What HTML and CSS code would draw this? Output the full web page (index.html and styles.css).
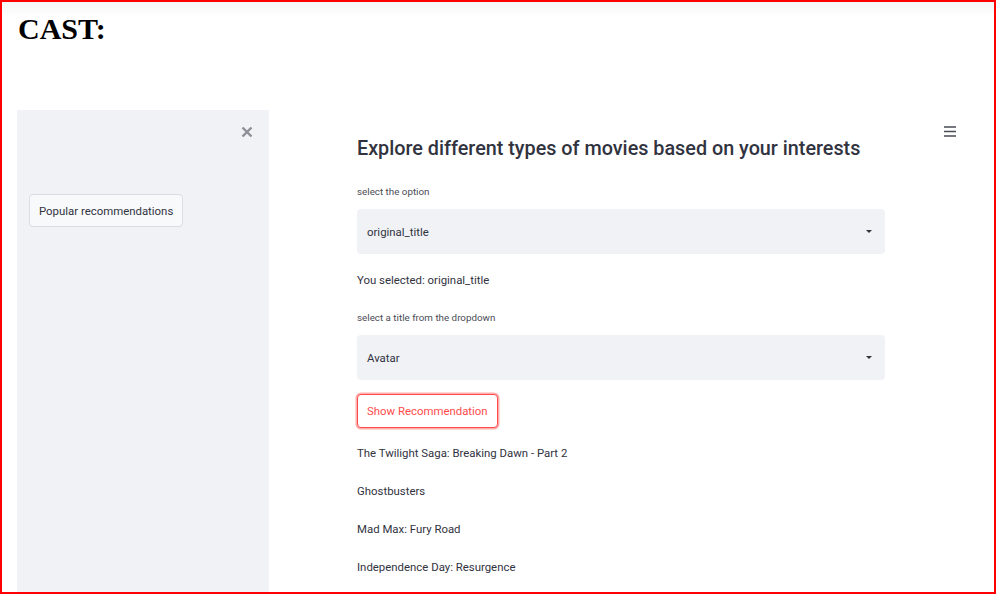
FILE: index.html
```html
<!DOCTYPE html>
<html lang="en">
<head>
<meta charset="utf-8">
<title>CAST</title>
<link rel="stylesheet" href="styles.css">
</head>
<body>
<div class="frame">
  <h1 class="cast">CAST:</h1>
  <div class="app">
    <aside class="sidebar">
      <div class="side-head">
        <button class="close" aria-label="Close sidebar">
          <svg width="12" height="12" viewBox="0 0 12 12"><path d="M1.5 1.5 L10.5 10.5 M10.5 1.5 L1.5 10.5" stroke="#8d8f96" stroke-width="2.4" stroke-linecap="butt"/></svg>
        </button>
      </div>
      <button class="side-btn">Popular recommendations</button>
    </aside>
    <main class="main">
      <section class="content">
        <h2 class="title">Explore different types of movies based on your interests</h2>
        <label class="label">select the option</label>
        <div class="select"><span>original_title</span><span class="caret"></span></div>
        <p class="text sel-text">You selected: original_title</p>
        <label class="label label2">select a title from the dropdown</label>
        <div class="select select2"><span>Avatar</span><span class="caret"></span></div>
        <button class="show-btn">Show Recommendation</button>
        <ul class="recs">
          <li>The Twilight Saga: Breaking Dawn - Part 2</li>
          <li>Ghostbusters</li>
          <li>Mad Max: Fury Road</li>
          <li>Independence Day: Resurgence</li>
        </ul>
      </section>
      <button class="menu" aria-label="Menu">
        <svg width="12" height="11" viewBox="0 0 12 11"><path d="M0 1 H12 M0 5.5 H12 M0 10 H12" stroke="#4a4c56" stroke-width="1.6"/></svg>
      </button>
    </main>
  </div>
</div>
</body>
</html>
```

FILE: styles.css
```css
html, body {
  margin: 0;
  padding: 0;
  background: #ffffff;
}

.frame {
  width: 996px;
  height: 594px;
  box-sizing: border-box;
  border: 2px solid #ff0000;
  padding-left: 15px;
  overflow: hidden;
  display: flex;
  flex-direction: column;
  background: linear-gradient(to bottom, #f6f6f6 0px, #ffffff 16px);
}

.cast {
  margin: 11px 0 0 1px;
  font-family: "Liberation Serif", "Times New Roman", serif;
  font-weight: bold;
  font-size: 30px;
  line-height: 32px;
  color: #000000;
}

.app {
  display: flex;
  flex: 1;
  margin-top: 65px;
  font-family: Roboto, "Liberation Sans", sans-serif;
  color: #31333f;
}

.sidebar {
  width: 252px;
  flex: none;
  background: #f0f2f6;
  padding: 14px 0 0 12px;
  box-sizing: border-box;
  display: flex;
  flex-direction: column;
  align-items: flex-start;
}

.side-head {
  align-self: stretch;
  display: flex;
  justify-content: flex-end;
  padding-right: 14px;
}

.close {
  border: 0;
  background: none;
  padding: 2px;
  width: 16px;
  height: 16px;
  display: flex;
  align-items: center;
  justify-content: center;
}

.side-btn {
  margin-top: 54px;
  height: 33px;
  padding: 0 9px;
  font-family: inherit;
  font-size: 11.4px;
  color: #31333f;
  background: #f8f9fb;
  border: 1px solid #dcdde2;
  border-radius: 4px;
}

.main {
  flex: 1;
  display: flex;
  align-items: flex-start;
}

.content {
  width: 528px;
  margin-left: 88px;
  display: flex;
  flex-direction: column;
  align-items: flex-start;
}

.title {
  margin: 26px 0 0 0;
  font-size: 19.8px;
  line-height: 26px;
  font-weight: 500;
  color: #31333f;
}

.label {
  margin-top: 24px;
  font-size: 9.8px;
  line-height: 12px;
  color: #4a4c56;
}

.label2 {
  margin-top: 24px;
}

.select {
  align-self: stretch;
  margin-top: 11px;
  height: 45px;
  background: #f0f2f6;
  border-radius: 4px;
  display: flex;
  align-items: center;
  justify-content: space-between;
  padding: 0 13px 0 10px;
  font-size: 11.4px;
}

.select2 {
  margin-top: 11px;
}

.caret {
  width: 0;
  height: 0;
  border-left: 3px solid transparent;
  border-right: 3px solid transparent;
  border-top: 3px solid #31333f;
}

.text {
  margin: 0;
  font-size: 11.4px;
  line-height: 16px;
}

.sel-text {
  margin-top: 18px;
}

.show-btn {
  margin-top: 14px;
  height: 34px;
  padding: 0 9px;
  font-family: inherit;
  font-size: 11.4px;
  color: #ff4b4b;
  background: #ffffff;
  border: 1px solid #ff4b4b;
  border-radius: 4px;
  box-shadow: 0 0 0 1.5px rgba(255, 75, 75, 0.45);
}

.recs {
  list-style: none;
  margin: 17px 0 0 0;
  padding: 0;
  display: flex;
  flex-direction: column;
  gap: 22px;
  font-size: 11.4px;
  line-height: 16px;
}

.menu {
  margin: 16px 38px 0 auto;
  border: 0;
  background: none;
  padding: 0;
  width: 12px;
  height: 11px;
  display: flex;
}
```
